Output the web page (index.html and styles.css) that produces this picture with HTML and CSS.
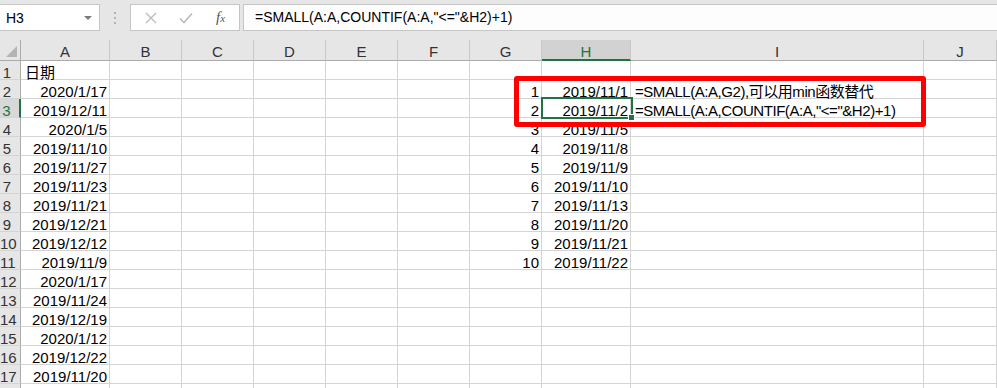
FILE: index.html
```
<!DOCTYPE html>
<html lang="zh">

<head>
    <meta charset="UTF-8">
    <title>日期排序</title>
    <link rel="stylesheet" href="styles.css">
</head>

<body>

    <div class="barra">
        <div class="nombre">
            <span>H3</span>
            <span class="flecha"></span>
        </div>
        <div class="puntos">
            <svg width="4" height="14" viewBox="0 0 4 14">
                <rect x="1" y="1" width="2" height="2" fill="#b3b3b3"/>
                <rect x="1" y="6" width="2" height="2" fill="#b3b3b3"/>
                <rect x="1" y="11" width="2" height="2" fill="#b3b3b3"/>
            </svg>
        </div>
        <div class="botones">
            <svg class="btn" width="12" height="12" viewBox="0 0 12 12">
                <path d="M1 1 L11 11 M11 1 L1 11" stroke="#bcbcbc" stroke-width="1.4" fill="none"/>
            </svg>
            <svg class="btn" width="14" height="12" viewBox="0 0 14 12">
                <path d="M1 6.5 L5 10.5 L13 1.5" stroke="#bcbcbc" stroke-width="1.6" fill="none"/>
            </svg>
            <span class="fx">f<small>x</small></span>
        </div>
        <div class="formula">=SMALL(A:A,COUNTIF(A:A,"&lt;="&amp;H2)+1)</div>
    </div>

    <div class="hoja">
        <div class="tabla" id="tabla"></div>
        <div class="seleccion"><span class="asa"></span></div>
        <div class="marco"></div>
    </div>

    <script>
        const tabla = document.getElementById('tabla');
        const columnas = ['A', 'B', 'C', 'D', 'E', 'F', 'G', 'H', 'I', 'J'];

        const colA = ['日期', '2020/1/17', '2019/12/11', '2020/1/5', '2019/11/10', '2019/11/27',
            '2019/11/23', '2019/11/21', '2019/12/21', '2019/12/12', '2019/11/9', '2020/1/17',
            '2019/11/24', '2019/12/19', '2020/1/12', '2019/12/22', '2019/11/20'];
        const colH = ['2019/11/1', '2019/11/2', '2019/11/5', '2019/11/8', '2019/11/9',
            '2019/11/10', '2019/11/13', '2019/11/20', '2019/11/21', '2019/11/22'];
        const colI = {
            2: '=SMALL(A:A,G2),可以用min函数替代',
            3: '=SMALL(A:A,COUNTIF(A:A,"<="&H2)+1)'
        };

        function celda(clase, texto) {
            const div = document.createElement('div');
            div.className = clase;
            div.textContent = texto || '';
            tabla.appendChild(div);
        }

        // encabezados
        celda('esquina');
        columnas.forEach(c => celda(c === 'H' ? 'cab activa' : 'cab', c));

        for (let fila = 1; fila <= 18; fila++) {
            // la fila 18 apenas asoma por abajo, sin numero visible
            celda(fila === 3 ? 'num activa' : 'num', fila < 18 ? fila : '');
            columnas.forEach(c => {
                let texto = '';
                let clase = 'celda';
                if (c === 'A' && colA[fila - 1]) {
                    texto = colA[fila - 1];
                    clase += fila === 1 ? '' : ' der';
                }
                if (c === 'G' && fila >= 2 && fila <= 11) {
                    texto = fila - 1;
                    clase += ' der';
                }
                if (c === 'H' && fila >= 2 && fila <= 11) {
                    texto = colH[fila - 2];
                    clase += ' der';
                }
                if (c === 'I' && colI[fila]) {
                    texto = colI[fila];
                    clase += ' txt';
                }
                celda(clase, texto);
            });
        }
    </script>

</body>

</html>
```

FILE: styles.css
```
body {
    margin: 0;
    width: 997px;
    height: 388px;
    overflow: hidden;
    background: #ffffff;
    font-family: "Liberation Sans", "Noto Sans CJK SC", sans-serif;
    color: #000;
}

/* barra de formulas */
.barra {
    height: 40px;
    background: #e6e6e6;
    display: flex;
    align-items: flex-start;
    padding-top: 4px;
    box-sizing: border-box;
}

.nombre {
    width: 100px;
    height: 27px;
    box-sizing: border-box;
    background: #fff;
    border: 1px solid #c6c6c6;
    border-left: none;
    display: flex;
    align-items: center;
    justify-content: space-between;
    padding: 0 7px 0 6px;
    font-size: 14px;
}

.flecha {
    width: 0;
    height: 0;
    border-left: 4px solid transparent;
    border-right: 4px solid transparent;
    border-top: 4px solid #7a7a7a;
}

.puntos {
    width: 30px;
    height: 27px;
    display: flex;
    align-items: center;
    justify-content: center;
}

.botones {
    width: 110px;
    height: 27px;
    box-sizing: border-box;
    background: #fff;
    border: 1px solid #c6c6c6;
    display: flex;
    align-items: center;
    padding-left: 14px;
    gap: 22px;
}

.fx {
    font-family: "Liberation Serif", serif;
    font-style: italic;
    font-size: 15px;
    color: #555;
    margin-left: 1px;
}

.fx small {
    font-size: 11px;
}

.formula {
    flex: 1;
    margin-left: 3px;
    height: 27px;
    box-sizing: border-box;
    background: #fdfdfd;
    border: 1px solid #c6c6c6;
    border-right: none;
    font-size: 14px;
    line-height: 25px;
    padding-left: 11px;
}

/* hoja */
.hoja {
    position: relative;
}

.tabla {
    display: grid;
    grid-template-columns: 21px 89px 72px 72px 72px 72px 72px 72px 89px 293px 73px;
    grid-template-rows: 21px;
    grid-auto-rows: 19px;
}

.esquina,
.cab,
.num,
.celda {
    box-sizing: border-box;
    overflow: hidden;
    white-space: nowrap;
    font-size: 15px;
}

.esquina {
    background: #e6e6e6;
    border-right: 1px solid #ababab;
    border-bottom: 1px solid #ababab;
    position: relative;
}

.esquina::after {
    content: "";
    position: absolute;
    right: 3px;
    bottom: 3px;
    border-left: 11px solid transparent;
    border-bottom: 11px solid #b4b4b4;
}

.cab {
    background: #e6e6e6;
    border-right: 1px solid #c8c8c8;
    border-bottom: 1px solid #ababab;
    text-align: center;
    line-height: 20px;
    padding-top: 2px;
    color: #333;
}

.cab.activa {
    background: #d2d2d2;
    border-bottom: 2px solid #217346;
    color: #217346;
}

.num {
    background: #e6e6e6;
    border-right: 1px solid #ababab;
    border-bottom: 1px solid #d4d4d4;
    line-height: 19px;
    padding: 2px 6px 0 0;
    text-align: center;
    color: #333;
}

.num.activa {
    background: #d8d8d8;
    border-right: 2px solid #217346;
    color: #217346;
}

.celda {
    border-right: 1px solid #d4d4d4;
    border-bottom: 1px solid #d4d4d4;
    line-height: 19px;
    padding: 2px 3px 0 4px;
    overflow: visible;
}

.der {
    text-align: right;
    padding-right: 2px;
}

.txt {
    letter-spacing: -0.45px;
}

/* celda activa */
.seleccion {
    position: absolute;
    left: 541px;
    top: 57px;
    width: 92px;
    height: 22px;
    box-sizing: border-box;
    border: 2px solid #217346;
}

.asa {
    position: absolute;
    right: -4px;
    bottom: -4px;
    width: 7px;
    height: 7px;
    box-sizing: border-box;
    background: #217346;
    border: 1px solid #fff;
}

/* recuadro rojo */
.marco {
    position: absolute;
    left: 514px;
    top: 36px;
    width: 412px;
    height: 51px;
    box-sizing: border-box;
    border: 5px solid #ff0000;
    border-radius: 3px;
}
```
